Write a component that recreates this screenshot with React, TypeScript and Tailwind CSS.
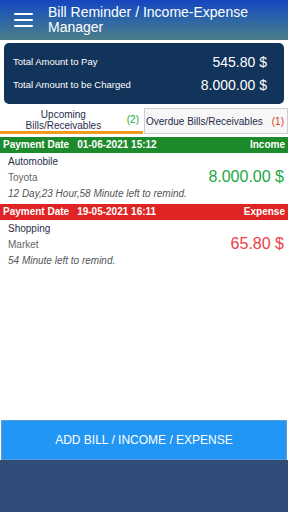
import React from 'react';

const font = { fontFamily: '"Liberation Sans", Arial, sans-serif' };

type Entry = {
  date: string;
  kind: 'Income' | 'Expense';
  category: string;
  name: string;
  amount: string;
  remind: string;
};

const entries: Entry[] = [
  {
    date: '01-06-2021 15:12',
    kind: 'Income',
    category: 'Automobile',
    name: 'Toyota',
    amount: '8.000.00 $',
    remind: '12 Day,23 Hour,58 Minute left to remind.',
  },
  {
    date: '19-05-2021 16:11',
    kind: 'Expense',
    category: 'Shopping',
    name: 'Market',
    amount: '65.80 $',
    remind: '54 Minute left to remind.',
  },
];

const App: React.FC = () => {
  const renderEntry = (entry: Entry) => {
    const income = entry.kind === 'Income';
    return (
      <div key={entry.date}>
        {/* Date bar */}
        <div
          className={`flex h-[16px] items-center justify-between px-[3px] text-[10px] font-bold leading-none text-white ${
            income ? 'bg-[#1d8a2c]' : 'bg-[#e02424]'
          }`}
        >
          <span>
            Payment Date<span className="ml-[8px]">{entry.date}</span>
          </span>
          <span>{entry.kind}</span>
        </div>

        {/* Item */}
        <div className="flex justify-between pl-[8px] pr-[4px] pt-[1px] pb-[2px]">
          <div className="flex flex-col">
            <span className="text-[10px] leading-[16px] text-[#1f2d4a]">{entry.category}</span>
            <span className="text-[10px] leading-[16px] text-[#666]">{entry.name}</span>
            <span className="text-[10px] italic leading-[16px] text-[#555]">{entry.remind}</span>
          </div>
          <span
            className={`mt-[15px] text-[16px] leading-[16px] ${income ? 'text-[#22a843]' : 'text-[#ec4048]'}`}
          >
            {entry.amount}
          </span>
        </div>
      </div>
    );
  };

  return (
    <div className="flex h-[512px] w-[288px] flex-col overflow-hidden bg-white" style={font}>
      {/* Header */}
      <div className="flex h-[40px] items-center bg-gradient-to-b from-[#1844c0] to-[#4d7d88]">
        <div className="ml-[14px] flex w-[19px] flex-col gap-[4px]">
          <div className="h-[2px] rounded-full bg-white" />
          <div className="h-[2px] rounded-full bg-white" />
          <div className="h-[2px] rounded-full bg-white" />
        </div>
        <h1 className="ml-[15px] text-[14px] leading-[15px] text-white">
          Bill Reminder / Income-Expense
          <br />
          Manager
        </h1>
      </div>

      {/* Totals */}
      <div className="mx-[4px] mt-[3px] flex h-[61px] flex-col justify-center gap-[9px] rounded-[5px] bg-[#12335a] pl-[9px] pr-[17px] text-white">
        <div className="flex items-center justify-between">
          <span className="text-[9.5px]">Total Amount to Pay</span>
          <span className="text-[14px] leading-none">545.80 $</span>
        </div>
        <div className="flex items-center justify-between">
          <span className="text-[9.5px]">Total Amount to be Charged</span>
          <span className="text-[14px] leading-none">8.000.00 $</span>
        </div>
      </div>

      {/* Tabs */}
      <div className="mt-[4px] flex h-[26px]">
        <div className="flex w-[143px] items-center border-b-[3px] border-[#f39a1c] bg-white pr-[4px]">
          <span className="flex-1 text-center text-[10px] leading-[11px] text-[#1f2d4a]">
            Upcoming
            <br />
            Bills/Receivables
          </span>
          <span className="text-[10px] text-[#22a843]">(2)</span>
        </div>
        <div className="ml-[1px] flex flex-1 items-center justify-between border border-[#cfcfcf] bg-[#f7f7f7] pl-[1px] pr-[3px]">
          <span className="text-[10px] text-[#1f2d4a]">Overdue Bills/Receivables</span>
          <span className="text-[10px] text-[#d9381e]">(1)</span>
        </div>
      </div>

      {/* List */}
      <div className="mt-[3px] flex-1">{entries.map(renderEntry)}</div>

      {/* Add button */}
      <button className="mx-px h-[40px] border border-[#5a9ad8] bg-[#2196f5] text-[12px] text-white">
        ADD BILL / INCOME / EXPENSE
      </button>

      {/* Bottom area */}
      <div className="h-[52px] bg-[#2f4d78]" />
    </div>
  );
};

export default App;
